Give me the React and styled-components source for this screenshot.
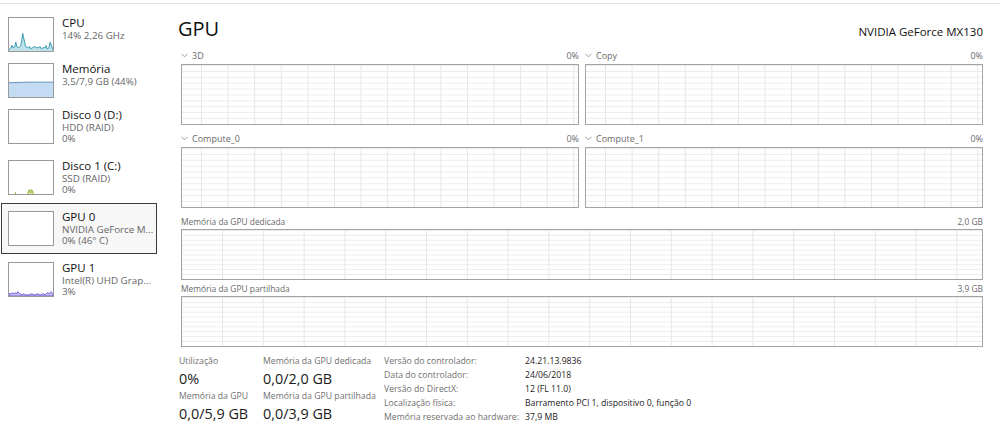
import styled, { createGlobalStyle } from "styled-components";

const GlobalStyle = createGlobalStyle`
  body {
    margin: 0;
    background: #ffffff;
    font-family: "Open Sans", "Noto Sans", sans-serif;
    color: #1a1a1a;
  }
`

const sideItems = [
    { title: "CPU", lines: ["14% 2,26 GHz"], thumb: "cpu" },
    { title: "Memória", lines: ["3,5/7,9 GB (44%)"], thumb: "mem" },
    { title: "Disco 0 (D:)", lines: ["HDD (RAID)", "0%"], thumb: "none" },
    { title: "Disco 1 (C:)", lines: ["SSD (RAID)", "0%"], thumb: "disk" },
    { title: "GPU 0", lines: ["NVIDIA GeForce M...", "0% (46° C)"], thumb: "none", selected: true },
    { title: "GPU 1", lines: ["Intel(R) UHD Grap...", "3%"], thumb: "gpu1" },
]

const engines = [
    { name: "3D", value: "0%" },
    { name: "Copy", value: "0%" },
    { name: "Compute_0", value: "0%" },
    { name: "Compute_1", value: "0%" },
]

const memoryCharts = [
    { name: "Memória da GPU dedicada", value: "2,0 GB", gap: 6 },
    { name: "Memória da GPU partilhada", value: "3,9 GB", gap: 1 },
]

const details = [
    ["Versão do controlador:", "24.21.13.9836"],
    ["Data do controlador:", "24/06/2018"],
    ["Versão do DirectX:", "12 (FL 11.0)"],
    ["Localização física:", "Barramento PCI 1, dispositivo 0, função 0"],
    ["Memória reservada ao hardware:", "37,9 MB"],
]

function ThumbGraph({ kind }) {
    if (kind === "cpu") {
        const pts = "0,29 2,27 3,25 4,27 6,26 7,22 8,26 10,27 12,25 13,21 14,14 15,18 16,22 17,26 19,27 21,26 22,28 24,27 26,26 28,27 30,27 32,26 33,28 35,27 37,27 38,25 39,28 41,27 42,22 43,24 44,26 45,29"
        return (
            <svg width="100%" height="100%" viewBox="0 0 45 30" preserveAspectRatio="none">
                <polygon points={pts + " 45,30 0,30"} fill="#bfe2ea" />
                <polyline points={pts} fill="none" stroke="#1b8aa6" strokeWidth="0.8" />
            </svg>
        )
    }
    if (kind === "mem") {
        return (
            <svg width="100%" height="100%" viewBox="0 0 45 30" preserveAspectRatio="none">
                <polygon points="0,17 20,16.5 45,16.5 45,30 0,30" fill="#c3dcf4" />
                <polyline points="0,17 20,16.5 45,16.5" fill="none" stroke="#4f7fae" strokeWidth="0.8" />
            </svg>
        )
    }
    if (kind === "disk") {
        return (
            <svg width="100%" height="100%" viewBox="0 0 45 30" preserveAspectRatio="none">
                <polyline points="19,30 20,27 21,26 22,29 23,26 24,27 25,30" fill="#d9e89a" stroke="#7fa51f" strokeWidth="0.8" />
                <rect x="6" y="28.5" width="1" height="1.5" fill="#7fa51f" />
            </svg>
        )
    }
    if (kind === "gpu1") {
        const pts = "0,30 0,28 2,28 3,27 5,28 7,27 8,28 9,26 11,28 13,29 15,28 17,29 20,29 23,28 26,29 29,28 32,29 35,28 37,29 39,27 41,28 43,26 45,28 45,30"
        return (
            <svg width="100%" height="100%" viewBox="0 0 45 30" preserveAspectRatio="none">
                <polygon points={pts} fill="#c9bdf2" stroke="#6a4fd6" strokeWidth="0.8" />
            </svg>
        )
    }
    return null
}

function Chevron() {
    return (
        <ChevronIcon viewBox="0 0 8 5" width="7" height="5">
            <polyline points="0.5,0.5 4,4 7.5,0.5" fill="none" stroke="#8a8a8a" strokeWidth="1" />
        </ChevronIcon>
    )
}

export default function App() {
    return (
        <>
        <GlobalStyle />
        <Window>
            <Sidebar>
                {sideItems.map((item) => (
                    <SideItem key={item.title} selected={item.selected} tall={item.lines.length > 1}>
                        <Thumb>
                            <ThumbGraph kind={item.thumb} />
                        </Thumb>
                        <SideText>
                            <SideTitle>{item.title}</SideTitle>
                            {item.lines.map((line) => <SideSub key={line}>{line}</SideSub>)}
                        </SideText>
                    </SideItem>
                ))}
            </Sidebar>
            <Main>
                <Header>
                    <Title>GPU</Title>
                    <Adapter>NVIDIA GeForce MX130</Adapter>
                </Header>
                <EngineGrid>
                    {engines.map((e) => (
                        <div key={e.name}>
                            <ChartHeader>
                                <ChartName><Chevron />{e.name}</ChartName>
                                <span>{e.value}</span>
                            </ChartHeader>
                            <ChartBox height={61} cell={26.6} offset={19} />
                        </div>
                    ))}
                </EngineGrid>
                {memoryCharts.map((m) => (
                    <MemoryBlock key={m.name} gap={m.gap}>
                        <MemoryHeader>
                            <span>{m.name}</span>
                            <span>{m.value}</span>
                        </MemoryHeader>
                        <ChartBox height={51} cell={40.8} offset={40} />
                    </MemoryBlock>
                ))}
                <Stats>
                    <StatColumn width={84}>
                        <StatLabel>Utilização</StatLabel>
                        <StatValue>0%</StatValue>
                        <StatLabel>Memória da GPU</StatLabel>
                        <StatValue>0,0/5,9 GB</StatValue>
                    </StatColumn>
                    <StatColumn width={121}>
                        <StatLabel>Memória da GPU dedicada</StatLabel>
                        <StatValue>0,0/2,0 GB</StatValue>
                        <StatLabel>Memória da GPU partilhada</StatLabel>
                        <StatValue>0,0/3,9 GB</StatValue>
                    </StatColumn>
                    <Details>
                        {details.map(([label, value]) => (
                            <DetailRow key={label}>
                                <DetailLabel>{label}</DetailLabel>
                                <DetailValue>{value}</DetailValue>
                            </DetailRow>
                        ))}
                    </Details>
                </Stats>
            </Main>
        </Window>
        </>
    )
}

const Window = styled.div`
    margin-top: 3px;
    border-top: 1px solid #e4e4e4;
    display: flex;
    height: 438px;
    box-sizing: border-box;
`
const Sidebar = styled.div`
    width: 165px;
    flex-shrink: 0;
    padding-top: 5px;
    display: flex;
    flex-direction: column;
`
const SideItem = styled.div`
    box-sizing: border-box;
    margin-left: 1px;
    width: 156px;
    height: ${(p) => (p.tall ? 51 : 46)}px;
    padding: 7px 6px 0 6px;
    display: flex;
    align-items: flex-start;
    gap: 8px;
    border: 1px solid ${(p) => (p.selected ? "#3a3a3a" : "transparent")};
    background-color: ${(p) => (p.selected ? "#f7f7f7" : "transparent")};
`
const Thumb = styled.div`
    box-sizing: border-box;
    width: 46px;
    height: 35px;
    flex-shrink: 0;
    border: 1px solid #9a9a9a;
    background: #ffffff;
    overflow: hidden;
    display: flex;
`
const SideText = styled.div`
    display: flex;
    flex-direction: column;
    margin-top: -2px;
`
const SideTitle = styled.div`
    font-size: 11.5px;
    line-height: 15px;
    color: #111;
    white-space: nowrap;
`
const SideSub = styled.div`
    font-size: 9.8px;
    line-height: 11px;
    color: #666;
    white-space: nowrap;
`
const Main = styled.div`
    flex: 1;
    min-width: 0;
    padding: 12px 17px 0 16px;
    display: flex;
    flex-direction: column;
`
const Header = styled.div`
    display: flex;
    justify-content: space-between;
    align-items: baseline;
    height: 26px;
    margin-bottom: 5px;
`
const Title = styled.div`
    font-size: 20px;
    line-height: 26px;
    margin-left: -3px;
    color: #111;
`
const Adapter = styled.div`
    font-size: 11.5px;
    color: #111;
`
const EngineGrid = styled.div`
    display: grid;
    grid-template-columns: 1fr 1fr;
    column-gap: 6px;
    row-gap: 5px;
`
const ChartHeader = styled.div`
    display: flex;
    justify-content: space-between;
    align-items: center;
    height: 16px;
    font-size: 9px;
    color: #6a6a6a;
    margin-bottom: 1px;
`
const ChartName = styled.span`
    display: flex;
    align-items: center;
    gap: 4px;
`
const ChevronIcon = styled.svg`
    display: block;
`
const ChartBox = styled.div`
    box-sizing: border-box;
    height: ${(p) => p.height}px;
    border: 1px solid #a3a3a3;
    background-color: #ffffff;
    background-image:
        linear-gradient(to right, #e6e6e6 1px, transparent 1px),
        linear-gradient(to bottom, #ececec 1px, transparent 1px);
    background-size: ${(p) => p.cell}px 100%, 100% 10%;
    background-position: ${(p) => p.offset}px 0, 0 0;
`
const MemoryBlock = styled.div`
    margin-top: ${(p) => p.gap}px;
`
const MemoryHeader = styled.div`
    display: flex;
    justify-content: space-between;
    align-items: center;
    height: 14px;
    font-size: 8.4px;
    color: #6a6a6a;
    margin-bottom: 1px;
`
const Stats = styled.div`
    display: flex;
    margin-top: 7px;
    margin-left: -2px;
`
const StatColumn = styled.div`
    width: ${(p) => p.width}px;
    display: flex;
    flex-direction: column;
`
const StatLabel = styled.div`
    font-size: 8.7px;
    line-height: 14px;
    color: #707070;
    white-space: nowrap;
`
const StatValue = styled.div`
    font-size: 14.4px;
    line-height: 21px;
    color: #1a1a1a;
    white-space: nowrap;
`
const Details = styled.div`
    display: flex;
    flex-direction: column;
`
const DetailRow = styled.div`
    display: flex;
    height: 14px;
    align-items: center;
    font-size: 8.7px;
`
const DetailLabel = styled.span`
    width: 141px;
    flex-shrink: 0;
    color: #707070;
    white-space: nowrap;
`
const DetailValue = styled.span`
    color: #1a1a1a;
    white-space: nowrap;
`
